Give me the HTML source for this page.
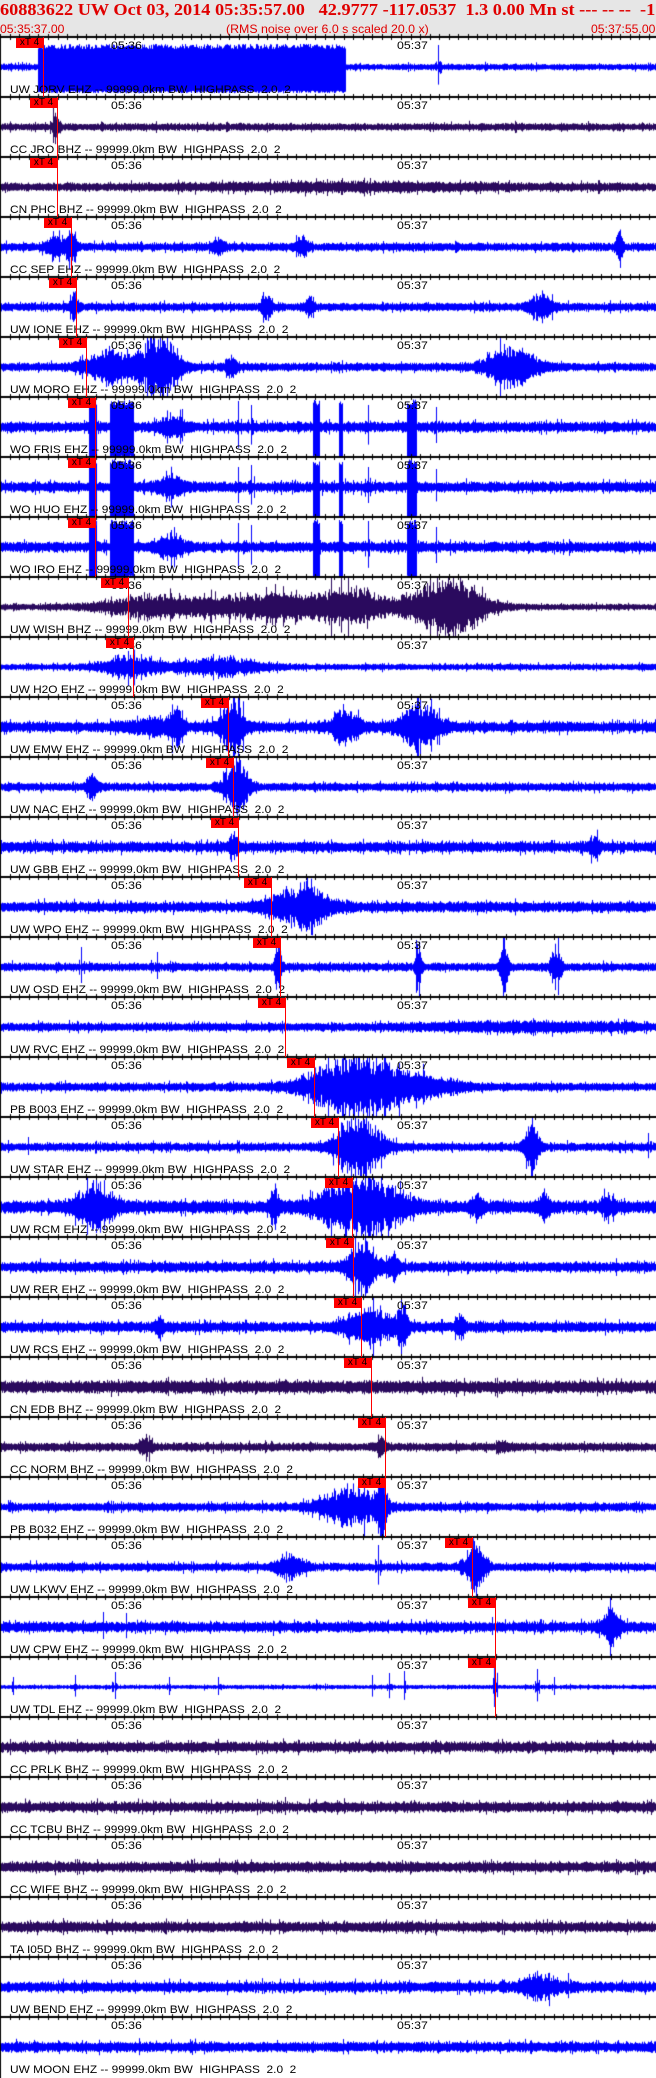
<!DOCTYPE html>
<html><head><meta charset="utf-8">
<style>
html,body{margin:0;padding:0;background:#fff;}
body{width:656px;height:2078px;position:relative;overflow:hidden;font-family:"Liberation Sans",sans-serif;}
#hdr{position:absolute;left:0;top:0;width:656px;height:37px;background:#e6e6e6;}
#title{position:absolute;left:0;top:0px;font-family:"Liberation Serif",serif;font-weight:bold;font-size:17px;color:#e00000;white-space:pre;transform-origin:0 0;line-height:20px;}
.sub{position:absolute;top:23px;font-size:12px;color:#e00000;white-space:pre;line-height:13px;transform-origin:0 0;}
canvas{position:absolute;left:0;top:0;}
.lab{position:absolute;left:10px;font-size:11px;color:#000;white-space:pre;line-height:11px;transform:scaleX(1.08);transform-origin:0 0;}
.tm{position:absolute;font-size:11px;color:#000;line-height:11px;transform:scaleX(1.12);transform-origin:0 0;}
.mk{position:absolute;width:27px;height:10px;background:#ff0000;font-size:10px;line-height:10px;color:#000;text-align:center;}
.ml{position:absolute;width:1px;height:60px;background:#ff0000;}
</style></head><body>
<div id="hdr">
<div id="title">60883622 UW Oct 03, 2014 05:35:57.00   42.9777 -117.0537  1.3 0.00 Mn st --- -- --  -1</div>
<div class="sub" id="s1" style="left:0">05:35:37.00</div>
<div class="sub" id="s2" style="left:226px">(RMS noise over 6.0 s scaled 20.0 x)</div>
<div class="sub" id="s3" style="left:591px">05:37:55.00</div>
</div>
<canvas id="c" width="656" height="2078"></canvas>
<div id="ov"></div>
<script>
(function(){
function fit(id,w){var t=document.getElementById(id);t.style.transform='scaleX('+(w/t.scrollWidth)+')';}
fit('title',655);fit('s1',64);fit('s2',203);fit('s3',64);
var seed=12345;function R(){seed|=0;seed=seed+0x6D2B79F5|0;var t=Math.imul(seed^seed>>>15,1|seed);t=t+Math.imul(t^t>>>7,61|t)^t;return((t^t>>>14)>>>0)/4294967296;}
var B='#0000ff',P='#2a0a5e';
var S=[
["UW JORV EHZ",B,3,[['b',38,345,25],['s',438,22]]],
["CC JRO BHZ",P,3.5,[['s',53,20],[56,3,10]]],
["CN PHC BHZ",P,4,[[350,150,2.5]]],
["CC SEP EHZ",B,4,[[54,8,12],[71,5,20],[218,6,7],[301,6,10],[619,3,20]]],
["UW IONE EHZ",B,4,[[74,4,12],[266,5,14],[310,4,10],[542,12,12]]],
["UW MORO EHZ",B,4,[[110,25,15],[158,20,28],[230,6,8],[512,25,20]]],
["WO FRIS EHZ",B,5,[['b',89,96,30],['b',110,133,30],['b',313,319,30],['b',339,342,30],['b',407,416,30],['s',238,26],['s',251,22],['s',368,22],['s',436,20],['s',182,18],[172,14,9]]],
["WO HUO EHZ",B,5,[['b',89,96,30],['b',110,133,30],['b',313,319,30],['b',339,342,30],['b',407,416,30],['s',238,20],['s',251,22],['s',368,20],['s',436,18],[172,14,9]]],
["WO IRO EHZ",B,5,[['b',89,96,30],['b',110,133,30],['b',313,319,30],['b',339,342,30],['b',407,416,30],['s',238,24],['s',251,22],['s',368,26],['s',436,20],[172,14,10]]],
["UW WISH BHZ",P,3,[[160,60,10],[280,60,13],[350,30,15],[440,40,20],[460,25,12]]],
["UW H2O EHZ",B,3,[[130,30,10],[220,40,9]]],
["UW EMW EHZ",B,5,[[176,6,18],[232,12,26],[345,15,16],[420,20,22],[150,25,7]]],
["UW NAC EHZ",B,4,[[92,6,10],[236,12,26]]],
["UW GBB EHZ",B,5,[[234,5,10],[594,6,8]]],
["UW WPO EHZ",B,5,[[300,30,18],[310,6,14]]],
["UW OSD EHZ",B,4,[['s',81,20],['s',157,15],[278,3,28],[418,3,26],[504,4,28],[556,5,22]]],
["UW RVC EHZ",B,4,[[530,120,3]]],
["PB B003 EHZ",B,4,[[355,45,30],[420,40,8]]],
["UW STAR EHZ",B,4,[[358,22,32],[531,7,28],['s',28,10],['s',648,14]]],
["UW RCM EHZ",B,6,[[94,20,20],[274,5,14],[362,40,30],[477,6,10],[544,6,10],[607,6,10]]],
["UW RER EHZ",B,5,[[362,14,28],[393,6,10]]],
["UW RCS EHZ",B,5,[[370,25,16],[402,5,22],[159,4,11],[460,5,9]]],
["CN EDB BHZ",P,6,[]],
["CC NORM BHZ",P,4,[[146,6,8],[381,4,9],[502,5,6]]],
["PB B032 EHZ",B,4,[[350,30,18],[381,5,30]]],
["UW LKWV EHZ",B,4,[[290,14,10],['s',378,22],[475,10,28]]],
["UW CPW EHZ",B,5,[['s',103,15],['s',126,14],[611,8,18],['s',492,10]]],
["UW TDL EHZ",B,2,[['s',13,10],['s',75,12],['s',115,15],['s',169,10],['s',218,10],['s',372,12],['s',389,14],['s',404,16],['s',494,25],['s',537,18],['s',554,10]]],
["CC PRLK BHZ",P,5,[]],
["CC TCBU BHZ",P,5,[['s',285,10]]],
["CC WIFE BHZ",P,5,[]],
["TA I05D BHZ",P,5,[]],
["UW BEND EHZ",B,5,[[540,20,10],['s',568,14]]],
["UW MOON EHZ",B,5,[]]
];
var MK={0:43,1:57,2:57,3:71,4:76,5:86,6:95,7:95,8:95,9:128,10:133,11:228,12:233,13:238,14:271,15:280,16:285,17:314,18:338,19:352,20:353,21:361,22:371,23:385,24:385,25:472,26:495,27:495};
var c=document.getElementById('c').getContext('2d');
var ov=document.getElementById('ov');var html='';
for(var i=0;i<S.length;i++){
 var top=37+i*60,cy=top+30,s=S[i];
 c.fillStyle=s[1];
 for(var x=1;x<656;x++){
  var a=s[2]*(0.75+0.35*R()),sp=0,blk=false;
  for(var k=0;k<s[3].length;k++){var e=s[3][k];
   if(e[0]==='b'){if(x>=e[1]&&x<=e[2]){a=Math.max(a,e[3]);blk=true;}}
   else if(e[0]==='s'){if(Math.abs(x-e[1])<1)sp=Math.max(sp,e[2]);else if(Math.abs(x-e[1])<4)a=Math.max(a,e[2]*0.4*R());}
   else{var d=(x-e[0])/e[1];a+=e[2]*Math.exp(-d*d)*(0.4+0.7*R());}
  }
  var r1=0.7+0.4*R(),r2=0.7+0.4*R();if(R()<0.1){r1*=1.5;r2*=1.5;}
  if(blk){r1=0.72+0.2*R();r2=0.95+0.1*R();}
  var up=Math.max(1,a*r1),dn=Math.max(1,a*r2);
  if(sp){up=sp;dn=sp*0.8;}
  var y0=Math.max(top+1,cy-up),y1=Math.min(top+59,cy+dn);
  c.fillRect(x,y0,1,y1-y0);
 }
 c.fillStyle='#000';c.fillRect(0,top-1,656,2);
 for(var sec=0;sec<=138;sec+=2){var tx=Math.round(0.3+sec*4.77);
  if(sec%10===3){c.fillRect(tx,top-4,1,10);}else{c.fillRect(tx,top-3,1,6);}
 }
 html+='<div class="lab" style="top:'+(top+48)+'px">'+s[0]+' -- 99999.0km BW  HIGHPASS  2.0  2</div>';
 html+='<div class="tm" style="left:111px;top:'+(top+4)+'px">05:36</div><div class="tm" style="left:397px;top:'+(top+4)+'px">05:37</div>';
 if(MK[i]!==undefined){var m=MK[i];html+='<div class="ml" style="left:'+m+'px;top:'+top+'px"></div><div class="mk" style="left:'+(m-27)+'px;top:'+(top+1)+'px">xT 4</div>';}
}
c.fillStyle='#000';c.fillRect(0,37,1,2041);
ov.innerHTML=html;
})();
</script>
</body></html>
